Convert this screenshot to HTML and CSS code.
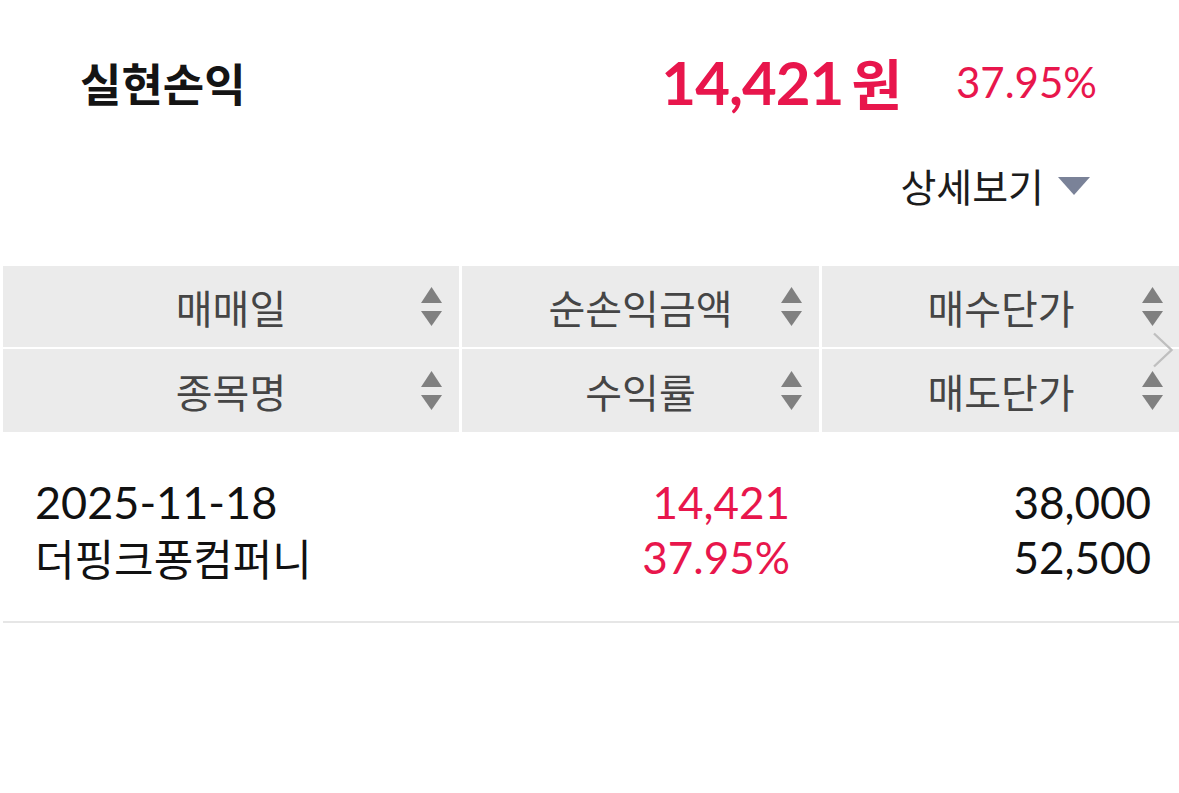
FILE: index.html
```html
<!DOCTYPE html>
<html lang="ko">
<head>
<meta charset="utf-8">
<title>실현손익</title>
<link rel="stylesheet" href="styles.css">
</head>
<body>
<div class="page">
  <div class="summary">
    <div class="title">실현손익</div>
    <div class="amount"><span class="amount-num">14,421</span><span class="amount-unit">원</span></div>
    <div class="rate">37.95%</div>
  </div>
  <div class="detail">
    <span class="detail-label">상세보기</span>
    <svg class="caret" width="32" height="18" viewBox="0 0 32 18"><polygon points="0,0 32,0 16,18" fill="#7a8298"/></svg>
  </div>
  <div class="table">
    <div class="thead">
      <div class="th"><span class="th-label">매매일</span><svg class="sort" width="21" height="39" viewBox="0 0 21 39"><polygon points="10.5,0 21,16 0,16" /><polygon points="0,24 21,24 10.5,39" /></svg></div>
      <div class="th"><span class="th-label">순손익금액</span><svg class="sort" width="21" height="39" viewBox="0 0 21 39"><polygon points="10.5,0 21,16 0,16" /><polygon points="0,24 21,24 10.5,39" /></svg></div>
      <div class="th"><span class="th-label">매수단가</span><svg class="sort" width="21" height="39" viewBox="0 0 21 39"><polygon points="10.5,0 21,16 0,16" /><polygon points="0,24 21,24 10.5,39" /></svg></div>
      <div class="th"><span class="th-label">종목명</span><svg class="sort" width="21" height="39" viewBox="0 0 21 39"><polygon points="10.5,0 21,16 0,16" /><polygon points="0,24 21,24 10.5,39" /></svg></div>
      <div class="th"><span class="th-label">수익률</span><svg class="sort" width="21" height="39" viewBox="0 0 21 39"><polygon points="10.5,0 21,16 0,16" /><polygon points="0,24 21,24 10.5,39" /></svg></div>
      <div class="th"><span class="th-label">매도단가</span><svg class="sort" width="21" height="39" viewBox="0 0 21 39"><polygon points="10.5,0 21,16 0,16" /><polygon points="0,24 21,24 10.5,39" /></svg></div>
    </div>
    <svg class="scroll-hint" width="22" height="36" viewBox="0 0 22 36"><polyline points="2,1.5 19.5,18 2,34.5" fill="none" stroke="#bfbfbf" stroke-width="2.4"/></svg>
    <div class="trow">
      <div class="td td-left">
        <div class="line num date">2025-11-18</div>
        <div class="line name">더핑크퐁컴퍼니</div>
      </div>
      <div class="td td-right up">
        <div class="line num">14,421</div>
        <div class="line num">37.95%</div>
      </div>
      <div class="td td-right">
        <div class="line num">38,000</div>
        <div class="line num">52,500</div>
      </div>
    </div>
  </div>
</div>
</body>
</html>
```

FILE: styles.css
```css
html, body {
  margin: 0;
  padding: 0;
  background: #ffffff;
}

body {
  font-family: "Noto Sans CJK KR", "Noto Sans", sans-serif;
  color: #111111;
  overflow: hidden;
}

.page {
  width: 1179px;
  height: 793px;
  overflow: hidden;
}

.summary {
  display: flex;
  align-items: center;
  height: 84px;
  margin-top: 40px;
  padding: 0 82px 0 80px;
}

.title {
  font-size: 45px;
  font-weight: 700;
  line-height: 1;
  color: #141414;
}

.amount {
  margin-left: auto;
  display: flex;
  align-items: baseline;
  color: #e8164c;
  line-height: 1;
}

.amount-num {
  font-family: "Lato", "Liberation Sans", sans-serif;
  font-weight: 700;
  font-size: 60px;
  letter-spacing: -1px;
}

.amount-unit {
  font-family: "Noto Sans CJK KR", sans-serif;
  font-weight: 700;
  font-size: 55px;
  margin-left: 8px;
}

.rate {
  margin-left: 54px;
  font-family: "Lato", "Liberation Sans", sans-serif;
  font-size: 42px;
  color: #e8164c;
  line-height: 1;
}

.detail {
  display: flex;
  justify-content: flex-end;
  align-items: center;
  height: 42px;
  margin-top: 40px;
  padding-right: 89px;
}

.detail-label {
  font-size: 39px;
  line-height: 1;
  color: #1c1c1c;
}

.caret {
  margin-left: 14px;
  margin-top: 2px;
}

.table {
  position: relative;
  margin-top: 60px;
  margin-left: 3px;
  overflow: hidden;
}

.thead {
  display: grid;
  grid-template-columns: 456px 357px 358px;
  grid-template-rows: 81px 83px;
  column-gap: 3px;
  row-gap: 2px;
}

.th {
  background: #ebebeb;
  display: grid;
  grid-template-columns: 1fr auto 1fr;
  align-items: center;
}

.th-label {
  grid-column: 2;
  font-size: 40px;
  line-height: 1;
  color: #454545;
}

.sort {
  grid-column: 3;
  justify-self: end;
  margin-right: 17px;
  fill: #808080;
}

.scroll-hint {
  position: absolute;
  left: 1149px;
  top: 66px;
}

.trow {
  display: grid;
  grid-template-columns: 456px 357px 358px;
  column-gap: 3px;
  padding: 43px 0 36px;
  border-bottom: 2px solid #e6e6e6;
}

.td {
  display: flex;
  flex-direction: column;
}

.td-left {
  padding-left: 32px;
  align-items: flex-start;
}

.td-right {
  padding-right: 29px;
  align-items: flex-end;
}

.line {
  height: 55px;
  line-height: 55px;
  white-space: nowrap;
}

.num {
  font-family: "Lato", "Liberation Sans", sans-serif;
  font-size: 44px;
  color: #111111;
}

.date {
  font-size: 45px;
}

.name {
  font-family: "Noto Sans CJK KR", sans-serif;
  font-size: 43px;
  color: #111111;
}

.up .num {
  color: #e8164c;
}
```
